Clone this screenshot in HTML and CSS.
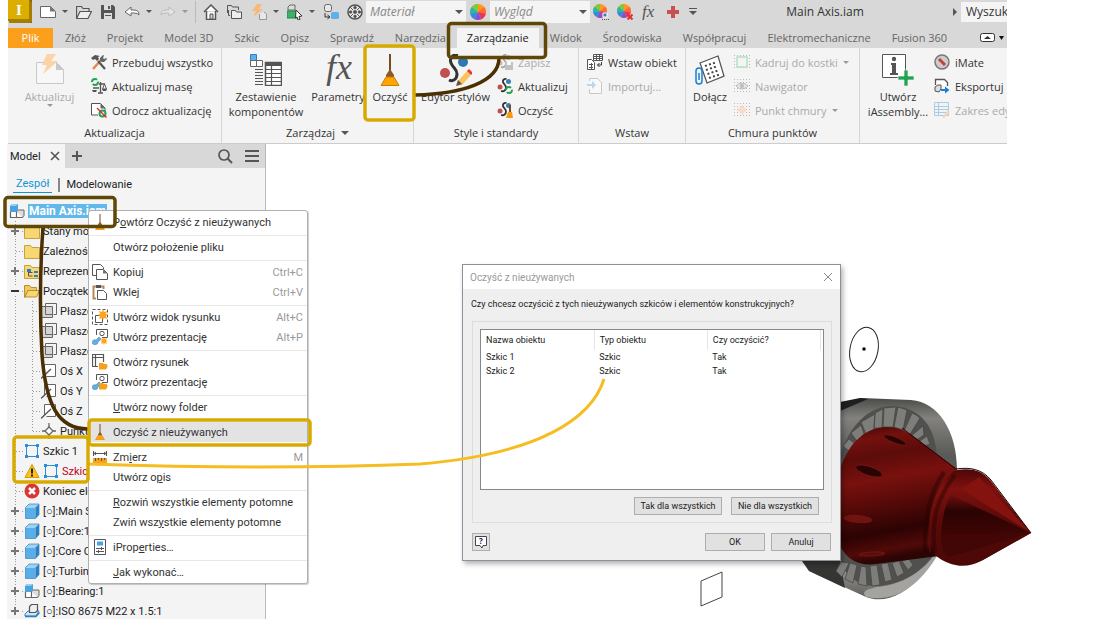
FILE: index.html
```html
<!DOCTYPE html>
<html lang="pl">
<head>
    <meta charset="UTF-8">
    <meta name="viewport" content="width=device-width, initial-scale=1.0">
    <title>Main Axis.iam</title>
    <link rel="stylesheet" href="styles.css">
</head>
<body>
    <!-- shared icons -->
    <svg class="defs" width="0" height="0" aria-hidden="true">
        <defs>
            <symbol id="i-wheel" viewBox="0 0 16 16">
                <g fill="none" stroke-width="8" transform="rotate(-90 8 8)">
                    <circle cx="8" cy="8" r="4" stroke="#ff9a1f"/>
                    <circle cx="8" cy="8" r="4" pathLength="7" stroke-dasharray="1 6" stroke-dashoffset="-1" stroke="#ff6a3a"/>
                    <circle cx="8" cy="8" r="4" pathLength="7" stroke-dasharray="1 6" stroke-dashoffset="-2" stroke="#e8385a"/>
                    <circle cx="8" cy="8" r="4" pathLength="7" stroke-dasharray="1 6" stroke-dashoffset="-3" stroke="#8a4be0"/>
                    <circle cx="8" cy="8" r="4" pathLength="7" stroke-dasharray="1 6" stroke-dashoffset="-4" stroke="#2f8be8"/>
                    <circle cx="8" cy="8" r="4" pathLength="7" stroke-dasharray="1 6" stroke-dashoffset="-5" stroke="#20b8b0"/>
                    <circle cx="8" cy="8" r="4" pathLength="7" stroke-dasharray="1 6" stroke-dashoffset="-6" stroke="#7ccb3a"/>
                </g>
            </symbol>
            <symbol id="i-broom" viewBox="0 0 20 32">
                <path d="M9 0h2v17H9z" fill="#7a4a1e"/>
                <path d="M10 15l4 6v2H6v-2z" fill="#8a5a2b"/>
                <path d="M6 23h8l5 8.500H1z" fill="#ffa400" stroke="#c87f0a"/>
            </symbol>
            <symbol id="i-folder" viewBox="0 0 16 16">
                <path d="M.5 2.500h6l1.500 2h7.500v11H.5z" fill="#f7d774" stroke="#c9a13a"/>
            </symbol>
            <symbol id="i-folder-open" viewBox="0 0 16 16">
                <path d="M.5 2.500h5l1.500 2h5.500v3H4l-3.500 7z" fill="#f0c95e" stroke="#b8912f"/>
                <path d="M4 7.500h11.500l-3 6.500H1z" fill="#f7d774" stroke="#b8912f"/>
            </symbol>
            <symbol id="i-plane" viewBox="0 0 16 16">
                <path d="M4.500 3v-2.500h11v11h-3" fill="none" stroke="#666"/>
                <path d="M.5 3.500h11v11H.5z" fill="#d4d4d4" stroke="#666"/>
                <path d="M4.500 4v7.500h7" fill="none" stroke="#666"/>
            </symbol>
            <symbol id="i-axis" viewBox="0 0 16 16">
                <path d="M3.500 11.500v-10h11v12h-9" fill="#fff" stroke="#666"/>
                <path d="M0 15.500L10 6" stroke="#555" stroke-width="1.300"/>
            </symbol>
            <symbol id="i-point" viewBox="0 0 16 16">
                <path d="M8 4l4 4-4 4-4-4z" fill="#fff" stroke="#666" stroke-width="1.300"/>
                <path d="M8 0v4M8 12v4M1 8h3M12 8h3" stroke="#666" stroke-width="1.300"/>
            </symbol>
            <symbol id="i-sketch" viewBox="0 0 16 16">
                <path d="M2.500 2.500h11v11h-11z" fill="none" stroke="#2a8fd8" stroke-dasharray="9 2" stroke-dashoffset="-1"/>
                <path d="M1 1h3v3H1zM12 1h3v3h-3zM1 12h3v3H1zM12 12h3v3h-3z" fill="#2a8fd8"/>
            </symbol>
            <symbol id="i-cube" viewBox="0 0 16 16">
                <path d="M1.500 4.500h10v11h-10z" fill="#58aee8"/>
                <path d="M1.500 4.500l3.500-3.500h10l-3.500 3.500z" fill="#9bd3f7"/>
                <path d="M11.500 4.500L15 1v10.500l-3.500 4z" fill="#2c7fc0"/>
                <path d="M1.500 4.500L5 1h10v10.500l-3.500 4h-10z" fill="none" stroke="#3c83b8" stroke-width=".7"/>
            </symbol>
            <symbol id="i-assembly" viewBox="0 0 16 16">
                <path d="M1.500 8.500h6v6h-6zM7.500 8.500h6v6h-6z" fill="#fff" stroke="#666" stroke-width="1.200"/>
                <path d="M13.500 14.500l1.500-2V7h-5.500L7.500 8.500" fill="#ddd" stroke="#666"/>
                <path d="M1 3l2-2h6v6L7 9H1z" fill="#4aa3e0"/>
                <path d="M1 3l2-2h6L7 3z" fill="#93cdf3"/>
            </symbol>
            <symbol id="i-iso" viewBox="0 0 16 16">
                <path d="M1 11l3-3h11l-3 5H1z" fill="#cfe6f7" stroke="#3c83b8"/>
                <path d="M1 13.500h11l3.500-4" fill="none" stroke="#2c7fc0" stroke-width="1.500"/>
                <path d="M5.500 3.500l2-2h6v6l-2 2h-6z" fill="#eee" stroke="#555" stroke-width="1.200"/>
            </symbol>
            <symbol id="i-plus" viewBox="0 0 10 10">
                <path d="M0 0h10v10H0z" fill="#f4f4f4"/>
                <path d="M4 1h2v3h3v2H6v3H4V6H1V4h3z" fill="#777"/>
            </symbol>
            <symbol id="i-minus" viewBox="0 0 10 10">
                <path d="M0 0h10v10H0z" fill="#f4f4f4"/>
                <path d="M1 4h8v2H1z" fill="#333"/>
            </symbol>
            <symbol id="i-style" viewBox="0 0 16 16">
                <circle cx="3" cy="9" r="2.500" fill="#c04f4f"/>
                <circle cx="11.500" cy="3.500" r="2.500" fill="#3a7fb5"/>
                <path d="M9.500 1c-2-.5-4 1-3.500 3s3 3 3 5.500-2 4.500-5 3.500" fill="none" stroke="#333" stroke-width="1.800"/>
            </symbol>
            <symbol id="i-dots" viewBox="0 0 16 16">
                <path d="M0 1.500h16M0 4.500h16M0 7.500h16M0 10.500h16M0 13.500h16" stroke="#bbb" stroke-dasharray="1 2"/>
            </symbol>
            <symbol id="i-present" viewBox="0 0 16 16">
                <path d="M4.500 6V.5h11v8H10" fill="#fff" stroke="#555"/>
                <circle cx="10" cy="4.500" r="2.200" fill="none" stroke="#555"/>
                <path d="M1 15c-2-2 0-5 3-4l3-3 2 2-3 3c0 2-3 4-5 2z" fill="#62b1e6" stroke="#3c83b8" stroke-width=".6"/>
            </symbol>
        </defs>
    </svg>

    <div class="app">
        <header class="ribbon">
            <div class="titlebar">
                <div class="tools">
                    <svg class="logo" viewBox="0 0 24 24"><path d="M0 20V2l3-3h21v24H2z" fill="#8f6a00"/><path d="M0 0h21v19H0z" fill="#dcae00"/><path d="M0 19h21v-19l3 3v18l-3 3H2z" fill="#a57d00"/><text x="11" y="15" class="logo-text">I</text></svg>
                    <svg class="ico" viewBox="0 0 16 16"><path d="M.5 2.500h10l5 5v6H.5z" fill="#fff" stroke="#666"/><path d="M10 2.500v5h5.500z" fill="#777"/></svg>
                    <i class="caret"></i>
                    <svg class="ico" viewBox="0 0 16 16"><path d="M.5 14V2.500h5l1.500 2h6V7" fill="none" stroke="#555" stroke-width="1.200"/><path d="M4 7.500h11.500L12 14.500H.5z" fill="#eee" stroke="#555" stroke-width="1.200"/></svg>
                    <svg class="ico" viewBox="0 0 16 16"><path d="M1 1h12l2 2v12H1z" fill="#555"/><path d="M4 1h7v5H4zM4 9h8v6H4z" fill="#ddd"/><path d="M8 2h2v3H8z" fill="#555"/><path d="M5 11.500h6" stroke="#555"/></svg>
                    <svg class="ico" viewBox="0 0 16 16"><path d="M1 8l6-5v3h3q5 0 5 5q-1-2-5-2H7v3z" fill="#fff" stroke="#666"/></svg>
                    <i class="caret"></i>
                    <svg class="ico" viewBox="0 0 16 16"><path d="M15 8L9 3v3H6q-5 0-5 5q1-2 5-2h3v3z" fill="#e6e6e6" stroke="#bbb"/></svg>
                    <i class="caret dim"></i>
                    <i class="line"></i>
                    <svg class="ico" viewBox="0 0 16 16"><path d="M1 8l7-7 7 7M3.500 7v8.500h9V7" fill="#fff" stroke="#555" stroke-width="1.500"/><path d="M7 10h3v5H7z" fill="#ccc" stroke="#555"/></svg>
                    <svg class="ico" viewBox="0 0 16 16"><path d="M.5 9V1.500h4l1 1.500h6v3" fill="none" stroke="#555"/><path d="M4.500 14.500v-8h4l1 1.500h5v6.500z" fill="#eee" stroke="#555"/><path d="M3 11.500H1.500V6" fill="none" stroke="#555"/></svg>
                    <svg class="ico" viewBox="0 0 16 16"><path d="M6 0h5L8 5h4L2 13l3-6H1z" fill="#f7b878"/><path d="M8.500 10v5.500h7V10L13 8" fill="#e8e8e8" stroke="#999"/></svg>
                    <i class="caret"></i>
                    <svg class="ico" viewBox="0 0 16 16"><path d="M1 6V3l2-2h5v5z" fill="#ddd" stroke="#666"/><path d="M0 7h10v7H0z" fill="#3cb366" stroke="#1d8a44"/><path d="M9 6l6 6-3 .5 1 3-2 .5-1-3-1.500 1z" fill="#fff" stroke="#333"/></svg>
                    <i class="caret"></i>
                    <svg class="ico" viewBox="0 0 16 16"><rect x="1.500" y=".5" width="7" height="7" rx="2" fill="#e8e8e8" stroke="#666"/><path d="M2 9v4h4M4.500 11L7 13l-2.500 2" fill="none" stroke="#333"/><rect x="8" y="8" width="8" height="7" rx="1.500" fill="#5fb0ea"/></svg>
                    <svg class="ico" viewBox="0 0 16 16"><circle cx="8" cy="8" r="7" fill="#eee" stroke="#555" stroke-width="1.500"/><circle cx="8" cy="8" r="2" fill="#555"/><path d="M8 1l2 3-2 1.500L6 4zM15 8l-3 2-1.500-2L12 6zM8 15l-2-3 2-1.500L10 12zM1 8l3-2 1.500 2L4 10z" fill="#555"/><path d="M3 3l3 3M13 3l-3 3M3 13l3-3M13 13l-3-3" stroke="#555"/></svg>
                </div>
                <div class="looks">
                    <label class="drop"><select aria-label="Materiał"><option>Materiał</option></select></label>
                    <svg class="ico"><use href="#i-wheel"/></svg>
                    <label class="drop"><select aria-label="Wygląd"><option>Wygląd</option></select></label>
                </div>
                <div class="tools">
                    <svg class="ico" viewBox="0 0 16 16"><use href="#i-wheel" width="14" height="14"/><path d="M10 9h4v4h-4z" fill="#2a7fc8" stroke="#fff"/><path d="M9 15.500h7" stroke="#555" stroke-dasharray="1 1"/></svg>
                    <svg class="ico" viewBox="0 0 16 16"><use href="#i-wheel" width="14" height="14"/><path d="M10.500 10.500l5 5m0-5l-5 5" stroke="#e03030" stroke-width="2"/></svg>
                    <svg class="ico" viewBox="0 0 16 16"><text x="1" y="13" class="fx-small">fx</text></svg>
                    <svg class="ico" viewBox="0 0 16 16"><path d="M6 2h4v4h4v4h-4v4H6v-4H2V6h4z" fill="#c85050"/></svg>
                    <svg width="8" height="8" viewBox="0 0 8 8"><path d="M0 .5h8" stroke="#555"/><path d="M0 3h8L4 7z" fill="#555"/></svg>
                </div>
                <h1 class="doc-name">Main Axis.iam</h1>
                <i class="caret side"></i>
                <input class="search" type="text" value="Wyszukaj" aria-label="Wyszukaj">
            </div>

            <nav class="tabs">
                <button class="tab file">Plik</button>
                <button class="tab">Złóż</button>
                <button class="tab">Projekt</button>
                <button class="tab">Model 3D</button>
                <button class="tab">Szkic</button>
                <button class="tab">Opisz</button>
                <button class="tab">Sprawdź</button>
                <button class="tab">Narzędzia</button>
                <button class="tab active">Zarządzanie</button>
                <button class="tab">Widok</button>
                <button class="tab">Środowiska</button>
                <button class="tab">Współpracuj</button>
                <button class="tab">Elektromechaniczne</button>
                <button class="tab">Fusion 360</button>
                <button class="collapse" aria-label="Minimalizuj"><svg width="24" height="10" viewBox="0 0 24 10"><rect x=".5" y=".5" width="14" height="8" rx="2" fill="#fff" stroke="#333"/><path d="M4 6l3.500-3L11 6z" fill="#333"/><path d="M19 3h5l-2.500 4z" fill="#111"/></svg></button>
            </nav>

            <div class="panels">
                <section class="panel p-update">
                    <div class="panel-body">
                        <button class="big dim">
                            <svg viewBox="0 0 32 32"><path d="M2.500 8.500h20l7 7v14h-27z" fill="#f7f7f7" stroke="#c8c8c8"/><path d="M22 8l8 8h-8z" fill="#c8c8c8"/><path d="M13 0h9l-5 7h7L9 20l4-9H8z" fill="#fbd3a4"/></svg>
                            <span>Aktualizuj</span>
                            <i class="caret"></i>
                        </button>
                        <div class="stack">
                            <button class="small"><svg class="ico" viewBox="0 0 16 16"><path d="M2 15l8-9" stroke="#e08a4a" stroke-width="2.500"/><path d="M0 4l4-3 5 1-2 1 1 2-2 2-2-2-2 1z" fill="#555"/><path d="M7 7l7 8" stroke="#555" stroke-width="2.200"/><path d="M9 7V4l3-3 1 .5-1 2.500 1 1 2.500-1 .5 1-3 3h-2z" fill="#666"/></svg>Przebuduj wszystko</button>
                            <button class="small"><svg class="ico" viewBox="0 0 16 16"><circle cx="4" cy="4" r="3" fill="none" stroke="#22a352" stroke-width="2" stroke-dasharray="7 2"/><path d="M2 10h6M8 6h6M9.500 4v11M7 15h5" stroke="#555" stroke-width="1.300"/><path d="M1 12h5l-1 2H2zM11 11h5l-1 2h-3z" fill="#555"/><path d="M13.500 6l-2 5h4z" fill="none" stroke="#555"/></svg>Aktualizuj masę</button>
                            <button class="small"><svg class="ico" viewBox="0 0 16 16"><path d="M7 13H.5V1.500h9L14 6v3" fill="#fff" stroke="#555"/><path d="M9.500 1.500v5H14z" fill="#666"/><circle cx="11.500" cy="11.500" r="3" fill="none" stroke="#22a352" stroke-width="2"/><path d="M6 6l9.500 9.500" stroke="#d33" stroke-width="1.500"/></svg>Odrocz aktualizację</button>
                        </div>
                    </div>
                    <div class="panel-title">Aktualizacja</div>
                </section>

                <section class="panel p-manage">
                    <div class="panel-body">
                        <button class="big wide">
                            <svg viewBox="0 0 32 32"><path d="M.5.5h6v6h-6z" fill="#5fb0ea" stroke="#2a7fc8"/><path d="M.5 6.500h6v6h-6zM6.500 6.500h6v6h-6z" fill="#fff" stroke="#666"/><path d="M5 15.500h8M5 18.500h8M5 21.500h8M5 24.500h8M5 27.500h8M5 30.500h8" stroke="#555"/><path d="M15.500 8.500h16v23h-16z" fill="#fff" stroke="#555" stroke-width="1.500"/><path d="M15 8h17v4H15z" fill="#555"/><path d="M16 15.500h15M16 19.500h15M16 23.500h15M16 27.500h15M21.500 12v19" stroke="#555" stroke-width="1.200"/></svg>
                            <span>Zestawienie<br>komponentów</span>
                        </button>
                        <button class="big mid">
                            <svg viewBox="0 0 32 32"><text x="4" y="25" class="fx-big">fx</text></svg>
                            <span>Parametry</span>
                        </button>
                        <button class="big slim">
                            <svg><use href="#i-broom"/></svg>
                            <span>Oczyść</span>
                        </button>
                    </div>
                    <div class="panel-title">Zarządzaj <i class="caret"></i></div>
                </section>

                <section class="panel p-styles">
                    <div class="panel-body">
                        <button class="big">
                            <svg viewBox="0 0 32 32"><circle cx="5" cy="19" r="5" fill="#c04f4f"/><circle cx="23" cy="8" r="5" fill="#2f78b5"/><path d="M18 1c-5-1-9 3-7 8s6 6 6 11-4 8-8 6" fill="none" stroke="#333" stroke-width="3"/><path d="M18 27l9-10 4 4-9 10-5 1z" fill="#fbc35c"/><path d="M27 17l2-2 4 4-2 2z" fill="#e33"/><path d="M16 32l2-6 4 4z" fill="#555"/></svg>
                            <span>Edytor stylów</span>
                        </button>
                        <div class="stack">
                            <button class="small dim"><svg class="ico faded" viewBox="0 0 16 16"><use href="#i-style"/><path d="M8 8h8v8H8z" fill="#777"/><path d="M10 8h4v3h-4z" fill="#fff"/></svg>Zapisz</button>
                            <button class="small"><svg class="ico" viewBox="0 0 16 16"><use href="#i-style"/><circle cx="12" cy="12" r="3" fill="#f4f4f4" stroke="#22a352" stroke-width="1.800" stroke-dasharray="7 2"/></svg>Aktualizuj</button>
                            <button class="small"><svg class="ico" viewBox="0 0 16 16"><use href="#i-style"/><path d="M12 3h2v7h-2z" fill="#7a4a1e"/><path d="M11 10h4l1 6H9z" fill="#f29b12"/></svg>Oczyść</button>
                        </div>
                    </div>
                    <div class="panel-title">Style i standardy</div>
                </section>

                <section class="panel p-insert">
                    <div class="panel-body">
                        <div class="stack">
                            <button class="small"><svg class="ico" viewBox="0 0 16 16"><path d="M6.500.5h9v6h-9zM6.500 2.500h9M6.500 4.500h9M9.500.5v6M12.500.5v6" fill="#fff" stroke="#555"/><path d="M.5 5.500h4l3 3v7h-7zM2 10.500h4M2 13.500h4M4.500 9v6" fill="#fff" stroke="#555"/><path d="M14.500 8v3h-4m2-2l-2 2 2 2" fill="none" stroke="#333"/></svg>Wstaw obiekt</button>
                            <button class="small dim"><svg class="ico faded" viewBox="0 0 16 16"><path d="M2.500 3V.5h8l4 4v11h-12V11" fill="#fff" stroke="#888"/><path d="M0 6h5V3l4 4-4 4V8H0z" fill="#5fb0ea"/></svg>Importuj...</button>
                        </div>
                    </div>
                    <div class="panel-title">Wstaw</div>
                </section>

                <section class="panel p-cloud">
                    <div class="panel-body">
                        <button class="big slim">
                            <svg viewBox="0 0 32 32"><path d="M6 9l18-7 6 20-17 7z" fill="#fff" stroke="#555" stroke-width="1.300"/><path d="M11 12l12-4M12 16l12-4M13.500 20l12-4M15 24l12-4" stroke="#444" stroke-width="2" stroke-dasharray="2 2.200"/><path d="M5 19v7M2 20v7a3 3 0 0 0 6 0V17a3 3 0 0 0-6 0v3" fill="none" stroke="#1b80d0" stroke-width="1.500"/></svg>
                            <span>Dołącz</span>
                        </button>
                        <div class="stack">
                            <button class="small dim"><svg class="ico" viewBox="0 0 16 16"><use href="#i-dots"/><path d="M3 3h10v10H3z" fill="#f4f4f4" stroke="#b5e0c4" stroke-width="1.500"/></svg>Kadruj do kostki <i class="caret"></i></button>
                            <button class="small dim"><svg class="ico" viewBox="0 0 16 16"><use href="#i-dots"/><path d="M2 8q6-6 12 0q-6 6-12 0z" fill="#e6e6e6" stroke="#bbb"/><circle cx="8" cy="8" r="2" fill="#bbb"/></svg>Nawigator</button>
                            <button class="small dim"><svg class="ico" viewBox="0 0 16 16"><use href="#i-dots"/><path d="M8 3l5 5-5 5-5-5z" fill="#f8dcc8"/></svg>Punkt chmury <i class="caret"></i></button>
                        </div>
                    </div>
                    <div class="panel-title">Chmura punktów</div>
                </section>

                <section class="panel p-author">
                    <div class="panel-body">
                        <button class="big mid">
                            <svg viewBox="0 0 32 32"><path d="M.5.500h23v23H.5z" fill="#fff" stroke="#555"/><path d="M9 9h5v10h2v2H8v-2h2v-8H9z" fill="#555"/><circle cx="12" cy="5" r="2.200" fill="#555"/><path d="M22 16h4v6h6v4h-6v6h-4v-6h-6v-4h6z" fill="#22a352" stroke="#f4f4f4" stroke-width=".7"/></svg>
                            <span>Utwórz<br>iAssembly...</span>
                        </button>
                        <div class="stack">
                            <button class="small"><svg class="ico" viewBox="0 0 16 16"><circle cx="8" cy="8" r="7" fill="#ccc" stroke="#777" stroke-width="1.500"/><path d="M5 5l6 6" stroke="#c24040" stroke-width="3"/></svg>iMate</button>
                            <button class="small"><svg class="ico" viewBox="0 0 16 16"><path d="M1.500 7V1.500h9l3 3V8" fill="#fff" stroke="#555" stroke-width="1.300"/><path d="M1 13V9l3-2h3v4l-2 3z" fill="#ddd" stroke="#555"/><path d="M7 11h4V8.500l4.500 3.500-4.500 3.500V13H7z" fill="#1b80d0"/></svg>Eksportuj</button>
                            <button class="small dim"><svg class="ico faded" viewBox="0 0 16 16"><path d="M.5.500h14v13H.5zM.5 4.500h14M.5 7.500h14M.5 10.500h14M4.500.500v13" fill="#e8f4fc" stroke="#4a90c0"/><path d="M8 15l6-7 2 2-6 6z" fill="#f0b060"/></svg>Zakres edycji</button>
                        </div>
                    </div>
                </section>
            </div>
        </header>

        <main class="workspace">
            <aside class="browser">
                <div class="browser-tabs">
                    <button class="browser-tab">Model <svg width="10" height="10" viewBox="0 0 10 10"><path d="M1 1l8 8m0-8L1 9" stroke="#555" stroke-width="1.600"/></svg></button>
                    <button class="bare" aria-label="Dodaj"><svg width="12" height="12" viewBox="0 0 12 12"><path d="M6 1v10M1 6h10" stroke="#555" stroke-width="2"/></svg></button>
                    <button class="bare find" aria-label="Szukaj"><svg width="16" height="16" viewBox="0 0 16 16"><circle cx="7" cy="7" r="5" fill="none" stroke="#555" stroke-width="1.700"/><path d="M10.500 10.500L15 15" stroke="#555" stroke-width="2"/></svg></button>
                    <button class="bare" aria-label="Menu"><svg width="14" height="14" viewBox="0 0 14 14"><path d="M0 2h14M0 7h14M0 12h14" stroke="#555" stroke-width="2"/></svg></button>
                </div>
                <div class="modes">
                    <a class="mode on" href="#">Zespół</a>
                    <a class="mode" href="#">Modelowanie</a>
                </div>
                <ul class="tree">
                    <li class="root"><svg class="ico"><use href="#i-assembly"/></svg><b>Main Axis.iam</b></li>
                    <li><i class="rail"><svg><use href="#i-plus"/></svg></i><svg class="ico"><use href="#i-folder"/></svg>Stany modelu</li>
                    <li><i class="rail"></i><svg class="ico"><use href="#i-folder"/></svg>Zależności</li>
                    <li><i class="rail"><svg><use href="#i-plus"/></svg></i><svg class="ico" viewBox="0 0 16 16"><use href="#i-folder"/><path d="M4.500 7v6h4M4.500 9.500h4" fill="none" stroke="#555"/><path d="M3 6h4v3H3zM10 8h4v2h-4zM10 12h4v2h-4z" fill="#2a7fc8"/></svg>Reprezentacje</li>
                    <li><i class="rail"><svg><use href="#i-minus"/></svg></i><svg class="ico"><use href="#i-folder-open"/></svg>Początek</li>
                    <li><i class="rail through"></i><i class="rail"></i><svg class="ico"><use href="#i-plane"/></svg>Płaszczyzna YZ</li>
                    <li><i class="rail through"></i><i class="rail"></i><svg class="ico"><use href="#i-plane"/></svg>Płaszczyzna XZ</li>
                    <li><i class="rail through"></i><i class="rail"></i><svg class="ico"><use href="#i-plane"/></svg>Płaszczyzna XY</li>
                    <li><i class="rail through"></i><i class="rail"></i><svg class="ico"><use href="#i-axis"/></svg>Oś X</li>
                    <li><i class="rail through"></i><i class="rail"></i><svg class="ico"><use href="#i-axis"/></svg>Oś Y</li>
                    <li><i class="rail through"></i><i class="rail"></i><svg class="ico"><use href="#i-axis"/></svg>Oś Z</li>
                    <li><i class="rail through"></i><i class="rail last"></i><svg class="ico"><use href="#i-point"/></svg>Punkt centralny</li>
                    <li><i class="rail"></i><svg class="ico"><use href="#i-sketch"/></svg>Szkic 1</li>
                    <li class="bad"><i class="rail"></i><svg class="ico" viewBox="0 0 16 16"><path d="M8 1.500L15 14.500H1z" fill="#ffc21a" stroke="#d99a00" stroke-linejoin="round"/><path d="M7 5.500h2v5H7zM7 11.500h2v2H7z" fill="#222"/></svg><svg class="ico"><use href="#i-sketch"/></svg>Szkic 2</li>
                    <li><i class="rail"></i><svg class="ico" viewBox="0 0 16 16"><circle cx="8" cy="8" r="7.500" fill="#d93636"/><path d="M5 5l6 6m0-6l-6 6" stroke="#fff" stroke-width="2.500"/></svg>Koniec elementów</li>
                    <li><i class="rail"><svg><use href="#i-plus"/></svg></i><svg class="ico"><use href="#i-cube"/></svg>[○]:Main Shaft:1</li>
                    <li><i class="rail"><svg><use href="#i-plus"/></svg></i><svg class="ico"><use href="#i-cube"/></svg>[○]:Core:1</li>
                    <li><i class="rail"><svg><use href="#i-plus"/></svg></i><svg class="ico"><use href="#i-cube"/></svg>[○]:Core Cap:1</li>
                    <li><i class="rail"><svg><use href="#i-plus"/></svg></i><svg class="ico"><use href="#i-cube"/></svg>[○]:Turbine:1</li>
                    <li><i class="rail"><svg><use href="#i-plus"/></svg></i><svg class="ico"><use href="#i-assembly"/></svg>[○]:Bearing:1</li>
                    <li><i class="rail last"><svg><use href="#i-plus"/></svg></i><svg class="ico"><use href="#i-iso"/></svg>[○]:ISO 8675 M22 x 1.5:1</li>
                </ul>
            </aside>

            <div class="canvas">
                <svg class="model" width="848" height="476" viewBox="266 144 848 476">
                    <defs>
                        <linearGradient id="shell" x1="0" y1="0" x2="0" y2="1">
                            <stop offset="0" stop-color="#4a4a48"/><stop offset=".1" stop-color="#83827e"/><stop offset=".28" stop-color="#5a5a58"/><stop offset=".6" stop-color="#565654"/><stop offset=".85" stop-color="#94928d"/><stop offset="1" stop-color="#5e5d5a"/>
                        </linearGradient>
                        <linearGradient id="cap" x1="0" y1="0" x2=".15" y2="1">
                            <stop offset="0" stop-color="#3c0505"/><stop offset=".12" stop-color="#74110e"/><stop offset=".25" stop-color="#5c0c0a"/><stop offset=".42" stop-color="#78110e"/><stop offset=".6" stop-color="#560a08"/><stop offset=".8" stop-color="#2c0303"/><stop offset=".93" stop-color="#500a08"/><stop offset="1" stop-color="#2b0404"/>
                        </linearGradient>
                        <linearGradient id="nose" x1="0" y1="0" x2="0" y2="1">
                            <stop offset="0" stop-color="#4d0707"/><stop offset=".2" stop-color="#7d120f"/><stop offset=".5" stop-color="#5c0a08"/><stop offset="1" stop-color="#4a0807"/>
                        </linearGradient>
                        <linearGradient id="shade" x1="0" y1="0" x2="0" y2="1">
                            <stop offset="0" stop-color="#6d0f0c"/><stop offset=".4" stop-color="#2b0303"/><stop offset="1" stop-color="#3d0504"/>
                        </linearGradient>
                    </defs>
                    <ellipse cx="864" cy="349.500" rx="14" ry="22.500" transform="rotate(11 864 349.500)" fill="#fff" stroke="#222"/>
                    <path d="M862.500 347.500h3v3h-3z" fill="#000"/>
                    <path d="M701 581l21-9v25l-21 9z" fill="#fff" stroke="#444"/>
                    <path d="M800 558l9 13 57 26c18 7 39-2 56-22l16-22 19-83c0-38-18-68-46-70l-49-2-22 5v155z" fill="url(#shell)"/>
                    <path d="M800 558l9 13 36 17-5-27z" fill="#353533"/>
                    <path d="M840 402l20-4 8 1-28 12z" fill="#1f1f1f"/>
                    <path d="M840 458c8-33 30-52 51-52 28 0 46 20 46 55l1 40-3 52c-12 19-34 32-58 33-17 1-31-9-37-25z" fill="#50504e"/>
                    <g fill="#7d7d7a" stroke="#444442" stroke-width=".7">
                        <path d="M843 446l6 5 5-8-5-4zM851 433l6 8 7-7-3-9zM861 422l5 12 8-5 1-15zM875 413l-1 15h8l1-19zM884 408l-1 19h10l3-20zM898 407l-4 20 9 3 4-20zM912 413l-8 18 5 5 11-18-4-3zM923 426l-13 11 5 4 9-6zM927 436l-10 7 5 4 8-3z"/>
                        <path d="M841 562l-5 9 6 6 7-14zM850 563l-5 16 8 4 4-18zM861 566l-3 18 9 2-1-19zM870 566l2 20 8-1-3-20zM881 564l4 18 7-2-4-17zM892 563l5 14 7-4-5-12zM902 561l6 9 5-5-4-6z"/>
                    </g>
                    <path d="M866 597c-3-4-4-7 11-10 25-2 46-15 58-33l2 2c-18 30-42 47-71 41z" fill="#a5a39f"/>
                    <path d="M840 470c8-27 26-43 47-43 10 0 17 3 26 9l44 33c-9 9-14 50-18 87l-63 8c-16 2-28-3-36-18z" fill="url(#cap)"/>
                    <path d="M957 470c14-2 25 0 34 11l40 52-50 28c-14 8-32 6-46-6-6-13-7-31-3-47 5-18 12-32 25-38z" fill="url(#nose)"/>
                    <path d="M1031 533l-80-38c-6 9-9 23-10 40z" fill="url(#shade)"/>
                    <path d="M1031 533l-90 2c0 10 2 17 7 22z" fill="#410605"/>
                    <path d="M1031 533l-70-44 18-12z" fill="#84130f"/>
                    <path d="M1031 533l-83 24 12 6q12 2 23-3z" fill="#4c0908"/>
                    <path d="M944 472c-15 22-20 45-19 81M955 475c-19 24-24 48-20 78" fill="none" stroke="#280303" stroke-width="4" opacity=".45"/>
                    <path d="M950 472c-18 24-23 48-20 80" fill="none" stroke="#8c1a15" stroke-width="2" opacity=".3"/>
                    <path d="M902 428l54 41c14-2 26 0 35 11l40 53" fill="none" stroke="#240303"/>
                    <g fill="#2a0404" stroke="#7c1a16" stroke-width=".7">
                        <ellipse cx="869" cy="471" rx="14" ry="4.500" transform="rotate(18 869 471)"/>
                        <ellipse cx="895" cy="440" rx="12" ry="3" transform="rotate(22 895 440)"/>
                        <ellipse cx="858" cy="519" rx="14" ry="3.500" transform="rotate(5 858 519)" fill="#70120f"/>
                        <ellipse cx="872" cy="554" rx="13" ry="2" transform="rotate(-3 872 554)" fill="#5a0d0b"/>
                    </g>
                </svg>

                <section class="dialog" role="dialog" aria-label="Oczyść z nieużywanych">
                    <div class="dialog-title">
                        <span>Oczyść z nieużywanych</span>
                        <button class="bare" aria-label="Zamknij"><svg width="10" height="10" viewBox="0 0 10 10"><path d="M1 1l8 8m0-8L1 9" stroke="#888"/></svg></button>
                    </div>
                    <p class="question">Czy chcesz oczyścić z tych nieużywanych szkiców i elementów konstrukcyjnych?</p>
                    <div class="group">
                        <div class="list">
                            <table>
                                <thead><tr><th>Nazwa obiektu</th><th>Typ obiektu</th><th>Czy oczyścić?</th></tr></thead>
                                <tbody>
                                    <tr><td>Szkic 1</td><td>Szkic</td><td>Tak</td></tr>
                                    <tr><td>Szkic 2</td><td>Szkic</td><td>Tak</td></tr>
                                </tbody>
                            </table>
                        </div>
                        <div class="group-actions">
                            <button class="btn long">Tak dla wszystkich</button>
                            <button class="btn long">Nie dla wszystkich</button>
                        </div>
                    </div>
                    <div class="dialog-foot">
                        <button class="btn help" aria-label="Pomoc"><svg width="14" height="14" viewBox="0 0 14 14"><path d="M1.500 1.500h11v9H9l-1 2.500-2-2.500H1.500z" fill="#fff" stroke="#445"/><text x="7" y="9" class="q">?</text></svg></button>
                        <button class="btn">OK</button>
                        <button class="btn">Anuluj</button>
                    </div>
                </section>
            </div>
        </main>

        <ul class="menu">
            <li><svg class="ico"><use href="#i-broom"/></svg><span>P<u>o</u>wtórz Oczyść z nieużywanych</span></li>
            <li class="sep"></li>
            <li><i class="ico"></i><span>Otwórz położenie pliku</span></li>
            <li class="sep"></li>
            <li><svg class="ico" viewBox="0 0 16 16"><path d="M4 11.500H.5V.500h8l3 3V5" fill="#fff" stroke="#555"/><path d="M4.500 5.500h7l4 4v6h-11z" fill="#fff" stroke="#555"/><path d="M11 5.500v4h4.500z" fill="#777"/></svg><span>Kopiuj</span><kbd>Ctrl+C</kbd></li>
            <li><svg class="ico" viewBox="0 0 16 16"><path d="M4 14.500H1.500v-12h10V5" fill="none" stroke="#b78a5a" stroke-width="2"/><path d="M4 1h5v3H4z" fill="#555"/><path d="M5.500 6.500h6l3 3v6h-9z" fill="#fff" stroke="#555"/></svg><span>Wklej</span><kbd>Ctrl+V</kbd></li>
            <li class="sep"></li>
            <li><svg class="ico" viewBox="0 0 16 16"><path d="M.5.500h15v15H.5z" fill="none" stroke="#555" stroke-dasharray="3 2"/><path d="M3.500 6.500h7v7h-7z" fill="#fff" stroke="#555"/><path d="M11 0l1 3 3-1-1 3 2 1-2 1 1 3-3-1-1 2-1-2-3 1 1-3-2-1 2-1-1-3 3 1z" fill="#ffa41c"/></svg><span>Utwórz widok rysunku</span><kbd>Alt+C</kbd></li>
            <li><svg class="ico" viewBox="0 0 16 16"><use href="#i-present"/><path d="M12 8l.8 2L15 9l-1 2.200 2 .8-2 .8 1 2.200-2.200-1-.8 2-.8-2-2.200 1 1-2.200-2-.8 2-.8-1-2.200 2.200 1z" fill="#ffa41c"/></svg><span>Utwórz prezentację</span><kbd>Alt+P</kbd></li>
            <li class="sep"></li>
            <li><svg class="ico" viewBox="0 0 16 16"><path d="M6 12.500H.5V.500h11V8M.5 3.500h11M3.500.500v12" fill="none" stroke="#555" stroke-width="1.200"/><path d="M7 9h4l1 1h3v1.500h1L14 15.500H7z" fill="#f7a01c"/></svg><span>Otwórz rysunek</span></li>
            <li><svg class="ico" viewBox="0 0 16 16"><use href="#i-present"/><path d="M7 9h4l1 1h3v1.500h1L14 15.500H7z" fill="#f7a01c"/></svg><span>Otwórz prezentację</span></li>
            <li class="sep"></li>
            <li><i class="ico"></i><span><u>U</u>twórz nowy folder</span></li>
            <li class="sep"></li>
            <li class="hot"><svg class="ico"><use href="#i-broom"/></svg><span>Oczyść z nieużywanych</span></li>
            <li class="sep"></li>
            <li><svg class="ico" viewBox="0 0 16 16"><path d="M2 4.500h12M1.500 2v5M14.500 2v5M4 3L2 4.500 4 6M12 3l2 1.500L12 6" fill="none" stroke="#555"/><path d="M1 9h14v5H1z" fill="#f7a01c"/><path d="M3.500 9v3M6.500 9v2M9.500 9v3M12.500 9v2" stroke="#555"/></svg><span>Zm<u>i</u>erz</span><kbd>M</kbd></li>
            <li><i class="ico"></i><span>Utwórz o<u>p</u>is</span></li>
            <li class="sep"></li>
            <li><i class="ico"></i><span><u>R</u>ozwiń wszystkie elementy potomne</span></li>
            <li><i class="ico"></i><span>Zwiń wsz<u>y</u>stkie elementy potomne</span></li>
            <li class="sep"></li>
            <li><svg class="ico" viewBox="0 0 16 16"><path d="M2.500.500h11v15h-11z" fill="#fff" stroke="#555"/><path d="M5 2.500h6v4H5z" fill="#4aa3e0"/><path d="M4 9.500h8M4 12.500h8M9.500 8v3M6.500 11v3" stroke="#555"/></svg><span>iProp<u>e</u>rties…</span></li>
            <li class="sep"></li>
            <li><i class="ico"></i><span><u>J</u>ak wykonać…</span></li>
        </ul>

        <!-- step callouts drawn over the window -->
        <svg class="callouts" width="1114" height="620" viewBox="0 0 1114 620" aria-hidden="true">
            <g fill="none" stroke-width="3.500">
                <path d="M499 58C499 82 462 94 415 95" stroke="#4a2f05"/>
                <path d="M43 227C40 270 40 320 42 355C46 405 58 429 88 429" stroke="#4a2f05"/>
                <path d="M88 464Q270 470 420 464C540 454 592 418 604 379" stroke="#f5bd22" stroke-width="3"/>
                <rect x="448.500" y="23.500" width="97" height="34" rx="3" stroke="#5f4706"/>
                <rect x="5" y="197.500" width="110" height="29" rx="3" stroke="#5f4706"/>
                <rect x="365" y="46" width="49" height="74" rx="3" stroke="#d8aa00"/>
                <rect x="14" y="437" width="74" height="45" rx="3" stroke="#d8aa00"/>
                <rect x="89" y="420" width="221" height="25" rx="3" stroke="#d8aa00"/>
            </g>
        </svg>
    </div>
</body>
</html>
```

FILE: styles.css
```css
* {
    box-sizing: border-box;
}
body {
    margin: 0;
    background: #fff;
    color: #333;
    font-family: "Open Sans", "Noto Sans", sans-serif;
    font-size: 11px;
}
button {
    padding: 0;
    border: none;
    background: none;
    color: inherit;
    font: inherit;
    white-space: nowrap;
    cursor: pointer;
}
ul {
    margin: 0;
    padding: 0;
    list-style: none;
}
svg {
    flex: none;
    display: block;
}
.defs {
    position: absolute;
}
.app {
    position: relative;
    display: flex;
    flex-direction: column;
    height: 100vh;
    padding-bottom: 1px;
    overflow: hidden;
}
.ico {
    flex: none;
    width: 16px;
    height: 16px;
}
.faded {
    opacity: 0.4;
}
.caret {
    flex: none;
    width: 6px;
    border: 3px solid transparent;
    border-top-color: #555;
    border-bottom: none;
}
.bare {
    display: flex;
    align-items: center;
}

/* ribbon */
.ribbon {
    flex: none;
    margin: 0 107px 0 8px;
    overflow: hidden;
    background: #d8d8d8;
    border-bottom: 1px solid #ccc;
}
.titlebar {
    display: flex;
    align-items: center;
    height: 23px;
    overflow: hidden;
}
.tools {
    display: flex;
    align-items: center;
    gap: 8px;
}
.tools .caret {
    margin-left: -2px;
}
.tools .caret.dim {
    opacity: 0.5;
}
.caret.side {
    width: 4px;
    border: 4px solid transparent;
    border-left-color: #555;
    border-right: none;
}
.line {
    width: 1px;
    height: 22px;
    margin: 0 -1px;
    background: #bbb;
}
.logo {
    width: 24px;
    height: 24px;
}
.logo-text {
    font: bold 15px "Liberation Serif", serif;
    fill: #fff;
    text-anchor: middle;
}
.fx-small {
    font: italic 17px "DejaVu Serif", serif;
    fill: #555;
}
.fx-small,
.fx-big {
    font-family: "Liberation Serif", serif;
}
.fx-big {
    font-size: 36px;
    font-style: italic;
    fill: #555;
}
.looks {
    display: flex;
    align-items: center;
    gap: 4px;
    margin: 0 3px;
}
.drop {
    display: flex;
    align-items: center;
    width: 100px;
    height: 22px;
    padding-right: 3px;
    background: #f4f4f4;
}
.drop select {
    flex: 1;
    min-width: 0;
    padding: 0 4px;
    border: none;
    appearance: none;
    background: none;
    color: #888;
    font: italic 12px "Open Sans", sans-serif;
}
.drop::after {
    content: "";
    border: 4px solid transparent;
    border-top-color: #555;
    border-bottom: none;
}
.doc-name {
    flex: 1;
    margin: 0;
    text-align: center;
    font-size: 12px;
    font-weight: normal;
}
.search {
    flex: none;
    width: 46px;
    height: 20px;
    margin-left: 4px;
    padding: 0 0 0 5px;
    border: none;
    background: #f4f4f4;
    color: #333;
    font: 12px "Open Sans", sans-serif;
}
.tabs {
    display: flex;
    gap: 1px;
    height: 25px;
    padding-top: 5px;
    overflow: hidden;
}
.tab {
    padding: 0 10px;
    color: #666;
    line-height: 18px;
}
.tab.file {
    width: 45px;
    margin-right: 1px;
    background: #fb9f1c;
    color: #fff;
}
.tab.active {
    background: #f4f4f4;
    color: #222;
}
.collapse {
    margin: 0 3px 0 auto;
}
.panels {
    display: flex;
    height: 95px;
    background: #f4f4f4;
}
.panel {
    flex: none;
    display: flex;
    flex-direction: column;
    padding: 2px 4px 0;
    border-right: 1px solid #d5d5d5;
}
.p-update {
    width: 214px;
}
.p-manage {
    width: 192px;
}
.p-styles {
    width: 165px;
}
.p-insert {
    width: 107px;
}
.p-cloud {
    width: 174px;
}
.p-author {
    flex: 1;
    padding-left: 6px;
    border: none;
    overflow: hidden;
}
.panel-body {
    display: flex;
    height: 75px;
}
.panel-title {
    display: flex;
    justify-content: center;
    align-items: center;
    gap: 6px;
    line-height: 16px;
}
.panel-title .caret {
    width: 8px;
    border-width: 4px;
    border-bottom: none;
}
.big {
    flex: none;
    display: flex;
    flex-direction: column;
    align-items: center;
    width: 75px;
    padding-top: 4px;
    line-height: 15px;
}
.big svg {
    width: 32px;
    height: 32px;
    margin-bottom: 3px;
}
.big.wide {
    width: 80px;
}
.big.mid {
    width: 64px;
}
.big.slim {
    width: 40px;
}
.dim {
    color: #aaa;
}
.dim .caret {
    border-top-color: #999;
}
.stack {
    display: flex;
    flex-direction: column;
    margin-left: 4px;
}
.small {
    display: flex;
    align-items: center;
    gap: 5px;
    height: 24px;
}

/* model browser */
.workspace {
    flex: 1;
    display: flex;
    min-height: 0;
    padding-left: 7px;
}
.browser {
    flex: none;
    width: 259px;
    overflow: hidden;
    background: #f4f4f4;
    border-right: 1px solid #bbb;
    color: #222;
}
.browser-tabs {
    display: flex;
    align-items: center;
    height: 24px;
    padding-right: 6px;
    gap: 6px;
    background: #d8d8d8;
}
.browser-tab {
    display: flex;
    align-items: center;
    gap: 9px;
    width: 58px;
    height: 24px;
    padding-left: 3px;
    background: #f4f4f4;
}
.find {
    margin: 0 6px 0 auto;
}
.browser,
.menu,
.dialog {
    font-family: Roboto, "Open Sans", sans-serif;
}
.modes {
    display: flex;
    align-items: center;
    height: 33px;
    padding-left: 6px;
}
.mode {
    padding: 0 5px 0 6px;
    color: #222;
    line-height: 14px;
    text-decoration: none;
    border-left: 2px solid #888;
}
.mode.on {
    margin-right: 6px;
    padding: 1px 3px;
    border-left: none;
    border-bottom: 1px solid #0a96d6;
    color: #0a96d6;
}
.tree li {
    display: flex;
    align-items: center;
    gap: 3px;
    height: 20px;
    white-space: nowrap;
}
.tree .root {
    padding-left: 2px;
}
.root b {
    padding: 0 1px;
    background: #62b8e8;
    color: #fff;
    font-size: 12px;
    line-height: 14px;
}
.tree .bad {
    color: #c00018;
}
.rail {
    flex: none;
    width: 17px;
    height: 20px;
    margin-right: -3px;
    padding: 5px 3px;
    background:
        repeating-linear-gradient(#999 0 1px, transparent 1px 3px) 8px 0 / 1px 100% no-repeat,
        repeating-linear-gradient(90deg, #999 0 1px, transparent 1px 3px) 9px 10px / 8px 1px no-repeat;
}
.rail.through {
    background: repeating-linear-gradient(#999 0 1px, transparent 1px 3px) 8px 0 / 1px 100% no-repeat;
}
.rail.last {
    background:
        repeating-linear-gradient(#999 0 1px, transparent 1px 3px) 8px 0 / 1px 10px no-repeat,
        repeating-linear-gradient(90deg, #999 0 1px, transparent 1px 3px) 9px 10px / 8px 1px no-repeat;
}
.rail svg {
    width: 10px;
    height: 10px;
}

/* canvas and dialog */
.canvas {
    position: relative;
    flex: 1;
    overflow: hidden;
}
.dialog {
    position: absolute;
    left: 196px;
    top: 120px;
    width: 379px;
    background: #efefef;
    border: 1px solid #8a929c;
    box-shadow: 2px 3px 5px rgba(0,0,0,0.3);
    color: #222;
    font-size: 9px;
}
.dialog-title {
    display: flex;
    justify-content: space-between;
    align-items: center;
    height: 24px;
    padding: 0 7px;
    background: #fff;
    color: #999;
    font-size: 10px;
}
.question {
    margin: 9px 8px 11px;
    line-height: 12px;
    white-space: nowrap;
}
.group {
    margin: 0 8px 0 9px;
    padding: 7px;
    border: 1px solid #ddd;
}
.list {
    height: 161px;
    background: #fff;
    border: 1px solid #828790;
}
table {
    width: 340px;
    border-collapse: collapse;
    table-layout: fixed;
}
th, td {
    height: 14px;
    padding: 0 5px;
    text-align: left;
    font-weight: normal;
    line-height: 12px;
}
th {
    height: 20px;
    border-right: 1px solid #e5e5e5;
}
.group-actions {
    display: flex;
    justify-content: flex-end;
    gap: 9px;
    padding: 7px 5px 0 0;
}
.btn {
    width: 60px;
    height: 18px;
    background: #e1e1e1;
    border: 1px solid #adadad;
}
.btn.long {
    width: 88px;
}
.dialog-foot {
    display: flex;
    gap: 6px;
    padding: 10px 9px 9px;
}
.btn.help {
    display: flex;
    justify-content: center;
    align-items: center;
    width: 18px;
    margin-right: auto;
}
.q {
    font: bold 8px "Open Sans", sans-serif;
    fill: #223;
    text-anchor: middle;
}

/* context menu */
.menu {
    position: absolute;
    left: 88px;
    top: 210px;
    width: 220px;
    padding: 1px 0;
    background: #fff;
    border: 1px solid #b0b0b0;
    border-radius: 3px;
    box-shadow: 1px 1px 1px rgba(0,0,0,0.2);
}
.menu li {
    display: flex;
    align-items: center;
    gap: 5px;
    height: 20px;
    padding: 0 4px 0 3px;
    white-space: nowrap;
}
.menu .sep {
    height: 5px;
    padding: 0;
    background: linear-gradient(#e8e8e8, #e8e8e8) 0 3px / 100% 1px no-repeat;
}
.menu .hot {
    background: #e3e3e3;
}
.menu kbd {
    margin-left: auto;
    color: #999;
    font: inherit;
}
.callouts {
    position: absolute;
    left: 0;
    top: 0;
    pointer-events: none;
}
```
